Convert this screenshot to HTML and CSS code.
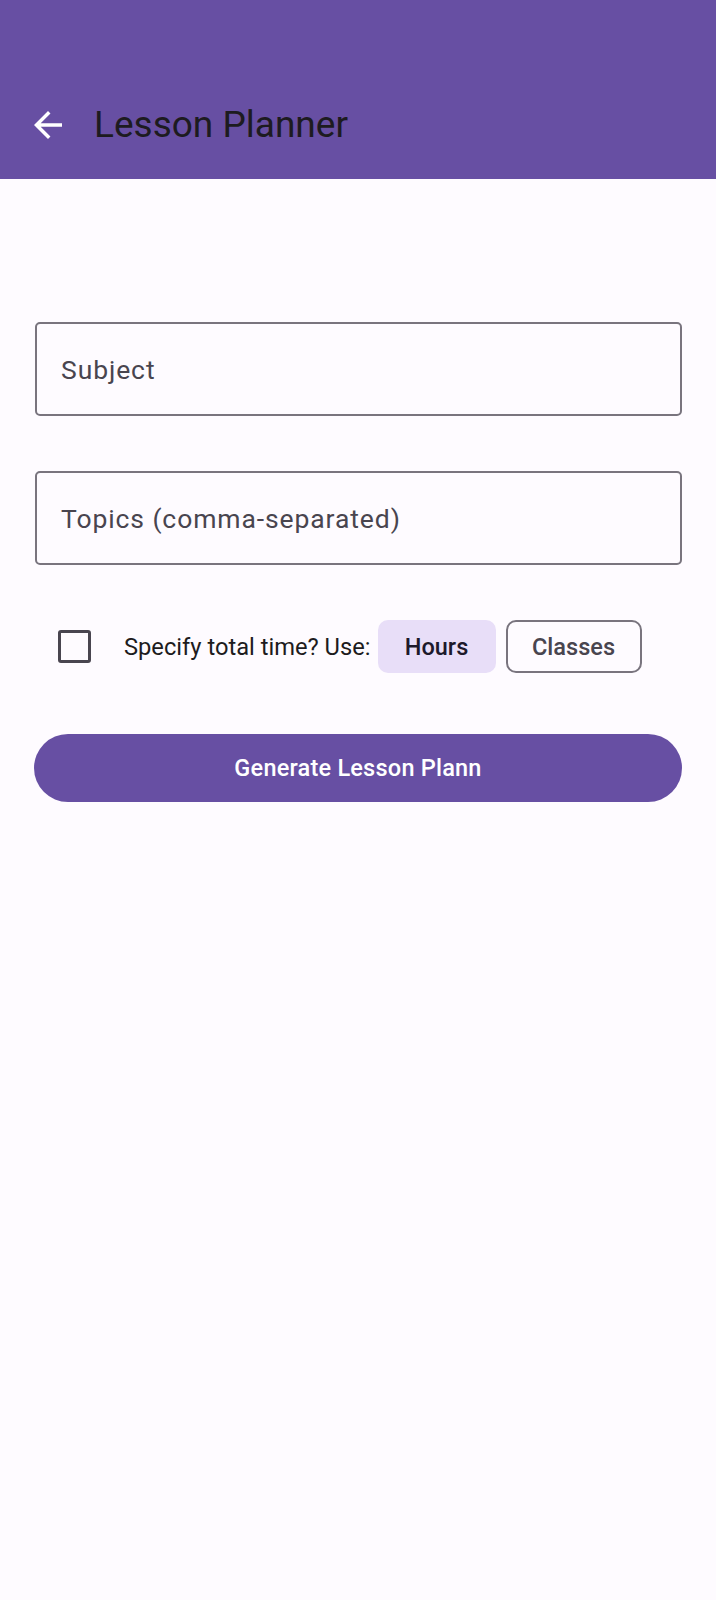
FILE: index.html
```html
<!DOCTYPE html>
<html lang="en">
<head>
<meta charset="utf-8">
<title>Lesson Planner</title>
<link rel="stylesheet" href="styles.css">
</head>
<body>
<header class="appbar">
  <div class="toolbar">
    <button class="icon-btn" aria-label="Back">
      <svg viewBox="0 0 24 24" width="42" height="42"><path fill="#ffffff" d="M20 11H7.83l5.59-5.59L12 4l-8 8 8 8 1.41-1.41L7.83 13H20v-2z"/></svg>
    </button>
    <h1 class="title">Lesson Planner</h1>
  </div>
</header>
<main class="form">
  <div class="field"><span class="placeholder">Subject</span></div>
  <div class="field"><span class="placeholder">Topics (comma-separated)</span></div>
  <div class="time-row">
    <span class="checkbox"></span>
    <span class="time-label">Specify total time? Use:</span>
    <span class="chip chip-selected">Hours</span>
    <span class="chip chip-outline">Classes</span>
  </div>
  <button class="primary-btn">Generate Lesson Plann</button>
</main>
</body>
</html>
```
FILE: styles.css
```css
* { box-sizing: border-box; }
html, body { margin: 0; padding: 0; }
body {
  background: #fefbff;
  font-family: Roboto, "Noto Sans", "Liberation Sans", sans-serif;
  width: 716px;
  min-height: 1600px;
}
.appbar {
  background: #674fa3;
  height: 179px;
  padding-top: 69px;
}
.toolbar {
  height: 110px;
  display: flex;
  align-items: center;
  padding-left: 27px;
}
.icon-btn {
  background: none;
  border: none;
  padding: 0;
  width: 42px;
  height: 42px;
  display: flex;
  align-items: center;
  justify-content: center;
  margin-top: 1px;
}
.icon-btn svg { display: block; }
.title {
  margin: 0 0 0 25px;
  font-size: 37px;
  font-weight: 400;
  color: #1d1b20;
  line-height: 1;
}
.form {
  padding: 143px 34px 0 35px;
  display: flex;
  flex-direction: column;
}
.field {
  height: 94px;
  border: 2px solid #79747e;
  border-radius: 5px;
  display: flex;
  align-items: center;
  padding-left: 24px;
  margin-bottom: 55px;
}
.placeholder {
  font-size: 26.5px;
  color: #49454f;
  letter-spacing: 0.9px;
}
.time-row {
  display: flex;
  align-items: center;
  height: 53px;
}
.checkbox {
  width: 33px;
  height: 33px;
  border: 3px solid #49454f;
  border-radius: 3px;
  margin-left: 23px;
  flex: none;
}
.time-label {
  margin-left: 33px;
  font-size: 23.7px;
  color: #1d1b20;
  margin-right: 7px;
  white-space: nowrap;
}
.chip {
  height: 53px;
  border-radius: 10px;
  display: flex;
  align-items: center;
  justify-content: center;
  font-family: "Roboto Medium", Roboto, "Noto Sans", sans-serif;
  font-size: 23.5px;
  font-weight: 500;
  flex: none;
}
.chip-selected {
  width: 118px;
  background: #e8def8;
  color: #1d192b;
}
.chip-outline {
  width: 136px;
  margin-left: 10px;
  border: 2px solid #79747e;
  color: #49454f;
}
.primary-btn {
  margin-top: 61px;
  margin-left: -1px;
  height: 68px;
  border: none;
  border-radius: 34px;
  background: #674fa3;
  color: #ffffff;
  font-family: "Roboto Medium", Roboto, "Noto Sans", "Liberation Sans", sans-serif;
  font-size: 23.5px;
  font-weight: 500;
  letter-spacing: 0.2px;
}
```
